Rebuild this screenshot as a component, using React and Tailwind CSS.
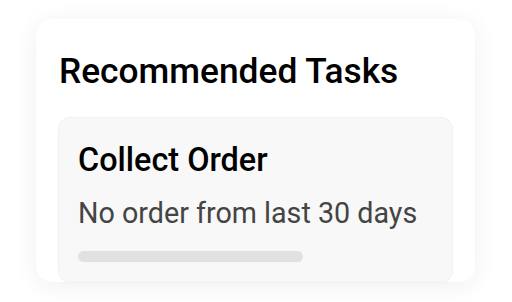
export default function App() {
  return (
    <div className="w-[512px] h-[302px] bg-white pt-[19px] pl-[36px]" style={{ fontFamily: "Roboto, sans-serif" }}>
      <div className="w-[439px] h-[263px] bg-white rounded-[16px] shadow-[0_4px_24px_rgba(30,40,80,0.07)] pt-[35px] px-[22px] flex flex-col">
        <h2 className="text-[35.3px] leading-none font-medium text-black whitespace-nowrap pl-[1px]">Recommended Tasks</h2>
        <div className="mt-[28px] flex-1 rounded-[12px] bg-[#f8f8f8] border border-[#f1f1f1] pt-[26px] px-[19px] pb-[20px]">
          <div className="text-[32.4px] leading-none font-medium text-black whitespace-nowrap">Collect Order</div>
          <div className="mt-[22px] text-[28.7px] leading-none text-[#444] whitespace-nowrap">No order from last 30 days</div>
          <div className="mt-[24px] w-[225px] h-[11px] rounded-full bg-[#e1e1e1]"></div>
        </div>
      </div>
    </div>
  );
}
